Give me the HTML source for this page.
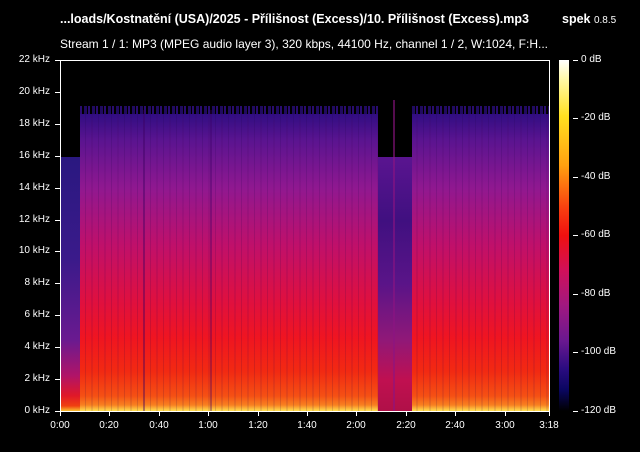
<!DOCTYPE html><html><head><meta charset="utf-8"><style>
body{margin:0;width:640px;height:452px;background:#000;position:relative;overflow:hidden;font-family:"Liberation Sans",Arial,sans-serif;color:#fff}
.a{position:absolute}
.t{font-size:12px;white-space:nowrap}
.yl{position:absolute;right:590px;font-size:10px;width:60px;text-align:right}
.tk{position:absolute;background:#fff}
.xl{position:absolute;top:420px;font-size:10px;width:40px;text-align:center}
.cl{position:absolute;left:581px;font-size:10px}
</style></head><body>
<div class="a t" style="left:60px;top:12px;font-weight:bold;font-size:12.5px">...loads/Kostnatění (USA)/2025 - Přílišnost (Excess)/10. Přílišnost (Excess).mp3</div>
<div class="a t" style="left:562px;top:12px;font-weight:bold;font-size:12.5px">spek <span style="font-weight:normal;font-size:10px">0.8.5</span></div>
<div class="a t" style="left:60px;top:37px">Stream 1 / 1: MP3 (MPEG audio layer 3), 320 kbps, 44100 Hz, channel 1 / 2, W:1024, F:H...</div>

<div class="a" style="left:60px;top:60px;width:489px;height:351px;background:#000;overflow:hidden">
 <div class="a" style="left:1px;top:97px;width:19px;height:254px;background:linear-gradient(#2a1880,#3a1a8a 40%,#6a1a90 72%,#b01468 86%,#e01828 94%,#f04010 98%,#f8c030 100%)"></div>
 <div class="a" style="left:20px;top:50px;width:469px;height:301px;background:linear-gradient(#2a0c80 0%,#5a1490 10%,#901890 26%,#c0106a 45%,#e0103e 64%,#f01520 76%,#f22a12 87%,#f55014 95%,#f88020 98%,#ffe050 100%)"></div>
 <div class="a" style="left:20px;top:50px;width:469px;height:301px;background:repeating-linear-gradient(90deg,rgba(0,0,0,0) 0 5px,rgba(30,0,70,.15) 5px 6px,rgba(0,0,0,0) 6px 11px,rgba(60,0,80,.1) 11px 13px)"></div>
 <div class="a" style="left:20px;top:46px;width:469px;height:8px;background:repeating-linear-gradient(90deg,#2a0c70 0 2px,#000 2px 4px,#200a60 4px 7px,#000 7px 8px)"></div>
 <div class="a" style="left:318px;top:46px;width:34px;height:51px;background:#000"></div>
 <div class="a" style="left:318px;top:97px;width:34px;height:254px;background:linear-gradient(#5a1490,#401080 25%,#5a1488 50%,#901878 72%,#c01050 88%,#b01048 100%)"></div>
 <div class="a" style="left:333px;top:40px;width:2px;height:311px;background:rgba(140,20,130,.6)"></div>
 <div class="a" style="left:83px;top:50px;width:2px;height:301px;background:rgba(60,0,100,.35)"></div>
 <div class="a" style="left:150px;top:50px;width:2px;height:301px;background:rgba(60,0,100,.35)"></div>
</div>
<div class="tk" style="left:60px;top:60px;width:490px;height:1px"></div>
<div class="tk" style="left:60px;top:60px;width:1px;height:352px"></div>
<div class="tk" style="left:549px;top:60px;width:1px;height:352px"></div>
<div class="tk" style="left:60px;top:411px;width:490px;height:1px"></div>

<div class="yl" style="top:54px">22 kHz</div><div class="tk" style="left:55px;top:60px;width:5px;height:1px"></div>
<div class="yl" style="top:86px">20 kHz</div><div class="tk" style="left:55px;top:92px;width:5px;height:1px"></div>
<div class="yl" style="top:118px">18 kHz</div><div class="tk" style="left:55px;top:124px;width:5px;height:1px"></div>
<div class="yl" style="top:150px">16 kHz</div><div class="tk" style="left:55px;top:156px;width:5px;height:1px"></div>
<div class="yl" style="top:182px">14 kHz</div><div class="tk" style="left:55px;top:188px;width:5px;height:1px"></div>
<div class="yl" style="top:214px">12 kHz</div><div class="tk" style="left:55px;top:220px;width:5px;height:1px"></div>
<div class="yl" style="top:245px">10 kHz</div><div class="tk" style="left:55px;top:251px;width:5px;height:1px"></div>
<div class="yl" style="top:277px">8 kHz</div><div class="tk" style="left:55px;top:283px;width:5px;height:1px"></div>
<div class="yl" style="top:309px">6 kHz</div><div class="tk" style="left:55px;top:315px;width:5px;height:1px"></div>
<div class="yl" style="top:341px">4 kHz</div><div class="tk" style="left:55px;top:347px;width:5px;height:1px"></div>
<div class="yl" style="top:373px">2 kHz</div><div class="tk" style="left:55px;top:379px;width:5px;height:1px"></div>
<div class="yl" style="top:405px">0 kHz</div><div class="tk" style="left:55px;top:411px;width:5px;height:1px"></div>

<div class="xl" style="left:40px">0:00</div><div class="tk" style="left:60px;top:411px;width:1px;height:5px"></div>
<div class="xl" style="left:89px">0:20</div><div class="tk" style="left:109px;top:411px;width:1px;height:5px"></div>
<div class="xl" style="left:139px">0:40</div><div class="tk" style="left:159px;top:411px;width:1px;height:5px"></div>
<div class="xl" style="left:188px">1:00</div><div class="tk" style="left:208px;top:411px;width:1px;height:5px"></div>
<div class="xl" style="left:238px">1:20</div><div class="tk" style="left:258px;top:411px;width:1px;height:5px"></div>
<div class="xl" style="left:287px">1:40</div><div class="tk" style="left:307px;top:411px;width:1px;height:5px"></div>
<div class="xl" style="left:336px">2:00</div><div class="tk" style="left:356px;top:411px;width:1px;height:5px"></div>
<div class="xl" style="left:386px">2:20</div><div class="tk" style="left:406px;top:411px;width:1px;height:5px"></div>
<div class="xl" style="left:435px">2:40</div><div class="tk" style="left:455px;top:411px;width:1px;height:5px"></div>
<div class="xl" style="left:485px">3:00</div><div class="tk" style="left:505px;top:411px;width:1px;height:5px"></div>
<div class="xl" style="left:529px">3:18</div><div class="tk" style="left:549px;top:411px;width:1px;height:5px"></div>

<div class="a" style="left:559px;top:60px;width:10px;height:351px;background:linear-gradient(#ffffff 0%,#fff8a0 6%,#ffe020 16%,#ffa010 30%,#f84010 42%,#f01010 50%,#d0105a 60%,#a01880 70%,#6a1890 80%,#2a0c80 88%,#0a0660 94%,#000 100%)"></div>
<div class="tk" style="left:573px;top:60px;width:5px;height:1px"></div><div class="cl" style="top:54px">0 dB</div>
<div class="tk" style="left:573px;top:118px;width:5px;height:1px"></div><div class="cl" style="top:112px">-20 dB</div>
<div class="tk" style="left:573px;top:177px;width:5px;height:1px"></div><div class="cl" style="top:171px">-40 dB</div>
<div class="tk" style="left:573px;top:235px;width:5px;height:1px"></div><div class="cl" style="top:229px">-60 dB</div>
<div class="tk" style="left:573px;top:294px;width:5px;height:1px"></div><div class="cl" style="top:288px">-80 dB</div>
<div class="tk" style="left:573px;top:352px;width:5px;height:1px"></div><div class="cl" style="top:346px">-100 dB</div>
<div class="tk" style="left:573px;top:411px;width:5px;height:1px"></div><div class="cl" style="top:405px">-120 dB</div>
</body></html>
